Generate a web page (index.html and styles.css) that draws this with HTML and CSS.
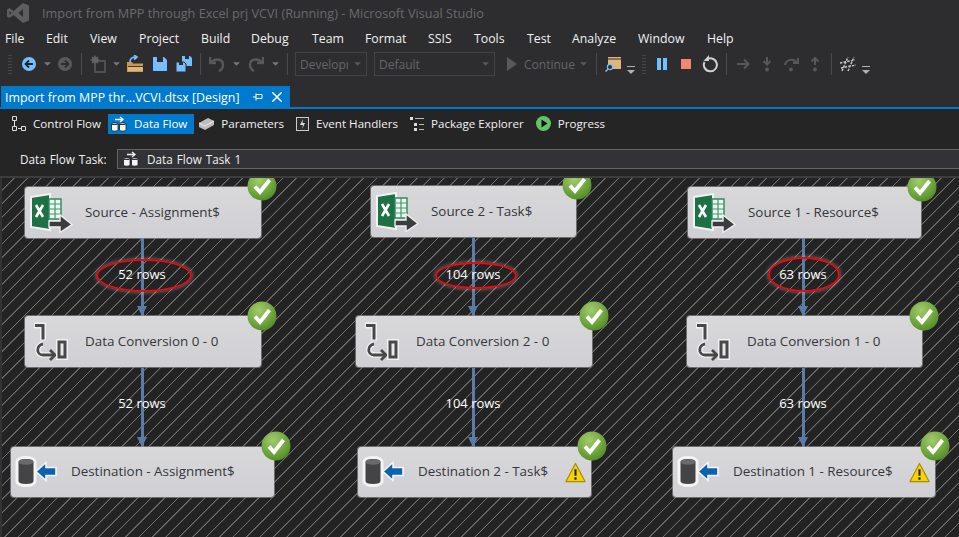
FILE: index.html
```html
<!DOCTYPE html>
<html lang="en">
<head>
<meta charset="utf-8">
<title>Import from MPP through Excel prj VCVI (Running) - Microsoft Visual Studio</title>
<link rel="stylesheet" href="styles.css">
</head>
<body>
<svg class="defs" width="0" height="0" aria-hidden="true">
  <defs>
    <radialGradient id="g-check" cx="40%" cy="30%" r="75%">
      <stop offset="0" stop-color="#a2cb6e"/>
      <stop offset=".55" stop-color="#76ab42"/>
      <stop offset="1" stop-color="#4f8a26"/>
    </radialGradient>
    <symbol id="i-check" viewBox="0 0 30 30">
      <circle cx="15" cy="15" r="14.5" fill="url(#g-check)"/>
      <path d="M8 15.500l5 5.500 9.500-12" fill="none" stroke="#fff" stroke-width="3.800"/>
    </symbol>
    <symbol id="i-excel" viewBox="0 0 44 40">
      <path d="M2 4L21 1v36L2 34z" fill="#1e7145" stroke="#f2f2f2" stroke-width="2"/>
      <path d="M20 6h12v20H20z" fill="#eef4f0" stroke="#2b8a5c" stroke-width="1.400"/>
      <path d="M20 11h12M20 16h12M20 21h12M26 6v20" stroke="#3f9a6c" stroke-width="1.200"/>
      <path d="M7 12l7 12M14 12L7 24" stroke="#fff" stroke-width="2.600" fill="none"/>
      <path d="M20 28h11v-6l12 9.500-12 8v-5.500H20z" fill="#3c3c3e" stroke="#eee" stroke-width="1.400"/>
    </symbol>
    <symbol id="i-conv" viewBox="0 0 40 40">
      <path d="M5 3.500h9v15" fill="none" stroke="#f1f1f1" stroke-width="6"/>
      <path d="M6 3.500h8v14" fill="none" stroke="#48484a" stroke-width="3"/>
      <path d="M14 22c-7 1-7 11 0 11h11" fill="none" stroke="#f1f1f1" stroke-width="5.500"/>
      <path d="M14 22c-7 1-7 11 0 11h11" fill="none" stroke="#48484a" stroke-width="2.800"/>
      <path d="M21 28l5 5-5 5" fill="none" stroke="#48484a" stroke-width="2.800"/>
      <rect x="28" y="18" width="10" height="19" fill="#f1f1f1" stroke="#f1f1f1" stroke-width="2"/>
      <rect x="30" y="20" width="6" height="15" fill="#e8e8e8" stroke="#48484a" stroke-width="3"/>
    </symbol>
    <symbol id="i-dest" viewBox="0 0 42 34">
      <path d="M2 7c0-6 18-6 18 0v19c0 6-18 6-18 0z" fill="#444446" stroke="#f4f4f4" stroke-width="3"/>
      <ellipse cx="11" cy="7" rx="7.500" ry="2.800" fill="#6a6a6c"/>
      <path d="M21 16.500l10-9v5h10v8H31v5z" fill="#0b63b0" stroke="#f5f5f5" stroke-width="1.600"/>
    </symbol>
    <symbol id="i-warn" viewBox="0 0 22 22">
      <path d="M11 1.500L21 20.500H1z" fill="#f5d400" stroke="#a68a00" stroke-width="1.200" stroke-linejoin="round"/>
      <path d="M11 7.500v7M11 16v2.600" stroke="#222" stroke-width="2.200"/>
    </symbol>
    <symbol id="i-flow" viewBox="0 0 16 16">
      <path d="M4 3.500h7M9 1l3 2.500L9 6" fill="none" stroke="currentColor" stroke-width="1.300"/>
      <path d="M.5 8c0-1.500 6.500-1.500 6.500 0v6c0 1.500-6.500 1.500-6.500 0z" fill="#f5f5f5" stroke="#1c1c1c" stroke-width=".8"/>
      <path d="M8.500 8c0-1.500 6.500-1.500 6.500 0v6c0 1.500-6.500 1.500-6.500 0z" fill="#f5f5f5" stroke="#1c1c1c" stroke-width=".8"/>
      <path d="M1 8.500h5.500M9 8.500h5.500" stroke="#333"/>
    </symbol>
    <symbol id="i-drop" viewBox="0 0 8 4"><path d="M0 0h8L4 4z" fill="currentColor"/></symbol>
    <symbol id="i-over" viewBox="0 0 10 9"><path d="M1 0h8v1H1zM1 4h8L5 8z" fill="currentColor"/></symbol>
  </defs>
</svg>

<header class="titlebar">
  <svg class="vs-logo" viewBox="0 0 24 22" width="24" height="22">
    <path d="M17 1l6 2.500v15L17 21 7.500 13l-4 3L1 14.600V7.400L3.500 6l4 3zM17 7l-4.500 4L17 15zM3.500 9v4l2-2z" fill="#5e5e61"/>
  </svg>
  <span class="title-text">Import from MPP through Excel prj VCVI (Running) - Microsoft Visual Studio</span>
</header>

<nav class="menubar">
  <span>File</span><span>Edit</span><span>View</span><span>Project</span><span>Build</span><span>Debug</span><span>Team</span><span>Format</span><span>SSIS</span><span>Tools</span><span>Test</span><span>Analyze</span><span>Window</span><span>Help</span>
</nav>

<div class="toolbar">
  <i class="grip"></i>
  <span class="slot first">
    <svg viewBox="0 0 14 14" width="14" height="14"><circle cx="7" cy="7" r="7" fill="#75beff"/><path d="M11 7H4M7 3.500L3.500 7 7 10.500" fill="none" stroke="#252526" stroke-width="1.800"/></svg>
  </span>
  <span class="drop"><svg width="7" height="4"><use href="#i-drop"/></svg></span>
  <span class="slot">
    <svg viewBox="0 0 14 14" width="14" height="14"><circle cx="7" cy="7" r="7" fill="#58585a"/><path d="M3 7h7M7 3.500L10.500 7 7 10.500" fill="none" stroke="#2d2d30" stroke-width="1.800"/></svg>
  </span>
  <i class="sep"></i>
  <span class="slot">
    <svg viewBox="0 0 16 18" width="16" height="18"><path d="M6 6h9v11H5V9" fill="none" stroke="#505052" stroke-width="2"/><path d="M5 0l1.200 2.200L8.500 1.500 7.800 3.800 10 5 7.800 6.200 8.500 8.500 6.200 7.800 5 10 3.800 7.800 1.500 8.500 2.200 6.200 0 5l2.200-1.200L1.500 1.500l2.300.700z" fill="#626264"/></svg>
  </span>
  <span class="drop"><svg width="7" height="4"><use href="#i-drop"/></svg></span>
  <span class="slot wide">
    <svg viewBox="0 0 18 18" width="18" height="18"><path d="M1 7h5l1 1.500h10V17H1z" fill="#c79a4f"/><path d="M2 11h15v5H2z" fill="#3a3a3c"/><path d="M2 12h15v4H2z" fill="#dcb67a"/><path d="M4 7c0-4 3-5 6-5M8 0l3 2-3 2.500" fill="none" stroke="#75beff" stroke-width="1.700"/></svg>
  </span>
  <span class="slot">
    <svg viewBox="0 0 14 14" width="14" height="14"><path d="M0 0h11l3 3v11H0z" fill="#75beff"/><path d="M4 0h6v5H4z" fill="#2d2d30"/></svg>
  </span>
  <span class="slot">
    <svg viewBox="0 0 16 16" width="16" height="16"><path d="M6 0h8l2 2v8H6z" fill="#75beff"/><path d="M9 0h4v3H9z" fill="#2d2d30"/><path d="M0 6h8l2 2v8H0z" fill="#75beff" stroke="#2d2d30"/><path d="M3 6h4v3H3z" fill="#2d2d30"/></svg>
  </span>
  <i class="sep"></i>
  <span class="slot">
    <svg viewBox="0 0 16 16" width="16" height="16"><path d="M1 1v6h6M2 7c3-5 12-5 12 2 0 3-2 5-4 6" fill="none" stroke="#58585a" stroke-width="2.400"/></svg>
  </span>
  <span class="drop wide"><svg width="7" height="4"><use href="#i-drop"/></svg></span>
  <span class="slot">
    <svg viewBox="0 0 16 16" width="16" height="16"><path d="M15 1v6H9M14 7C11 2 2 2 2 9c0 3 2 5 4 6" fill="none" stroke="#58585a" stroke-width="2.400"/></svg>
  </span>
  <span class="drop wide"><svg width="7" height="4"><use href="#i-drop"/></svg></span>
  <i class="sep"></i>
  <span class="combo combo-a">Developı<svg width="7" height="4"><use href="#i-drop"/></svg></span>
  <span class="combo combo-b">Default<svg width="7" height="4"><use href="#i-drop"/></svg></span>
  <span class="slot play">
    <svg viewBox="0 0 10 14" width="10" height="14"><path d="M0 0l10 7-10 7z" fill="#58585a"/></svg>
  </span>
  <span class="continue">Continue<svg width="7" height="4"><use href="#i-drop"/></svg></span>
  <i class="sep"></i>
  <span class="slot">
    <svg viewBox="0 0 16 16" width="16" height="16"><path d="M3 1h13v12H3z" fill="#dcb67a"/><path d="M3 3h13" stroke="#2d2d30"/><circle cx="5" cy="11" r="2.600" fill="#2d2d30" stroke="#75beff" stroke-width="1.300"/><path d="M3 13l-2.500 2.500" stroke="#75beff" stroke-width="1.500"/></svg>
  </span>
  <span class="over"><svg width="10" height="9"><use href="#i-over"/></svg></span>
  <i class="grip inner"></i>
  <span class="slot">
    <svg viewBox="0 0 10 12" width="10" height="12"><path d="M0 0h4v12H0zM6 0h4v12H6z" fill="#75beff"/></svg>
  </span>
  <span class="slot">
    <svg viewBox="0 0 10 10" width="10" height="10"><rect width="10" height="10" fill="#f48771"/></svg>
  </span>
  <span class="slot">
    <svg viewBox="0 0 16 18" width="16" height="18"><path d="M4 5a6.500 6.500 0 1 1-1.500 2" fill="none" stroke="#d0d0d0" stroke-width="2"/><path d="M7 0v6H1.500z" fill="#d0d0d0"/></svg>
  </span>
  <i class="sep"></i>
  <span class="slot">
    <svg viewBox="0 0 13 10" width="13" height="10"><path d="M0 5h11M7 .5L11.500 5 7 9.500" fill="none" stroke="#58585a" stroke-width="2"/></svg>
  </span>
  <span class="slot">
    <svg viewBox="0 0 10 15" width="10" height="15"><path d="M5 0v7M1.500 4L5 7.500 8.500 4" fill="none" stroke="#58585a" stroke-width="2"/><circle cx="5" cy="12.500" r="2" fill="#58585a"/></svg>
  </span>
  <span class="slot">
    <svg viewBox="0 0 15 15" width="15" height="15"><path d="M1 8c1-6 9-7 12-2M14 1v5H9" fill="none" stroke="#58585a" stroke-width="2"/><circle cx="7" cy="12.500" r="2" fill="#58585a"/></svg>
  </span>
  <span class="slot">
    <svg viewBox="0 0 10 15" width="10" height="15"><path d="M5 8V1M1.500 4.500L5 1l3.500 3.500" fill="none" stroke="#58585a" stroke-width="2"/><circle cx="5" cy="12.500" r="2" fill="#58585a"/></svg>
  </span>
  <i class="sep"></i>
  <span class="slot">
    <svg viewBox="0 0 16 16" width="16" height="16"><path d="M0 7l15-3M1 12l15-3M2 15L8 1M8 15L14 1" fill="none" stroke="#c8c8c8" stroke-width="1.400" stroke-dasharray="2.500 1.200"/></svg>
  </span>
  <span class="over"><svg width="10" height="9"><use href="#i-over"/></svg></span>
</div>

<div class="doc-tabs">
  <div class="doc-tab">
    <span>Import from MPP thr...VCVI.dtsx [Design]</span>
    <svg class="pin" viewBox="0 0 10 8" width="10" height="8"><path d="M0 4h3M3 .5v7M3 1.500h6v4H3" fill="none" stroke="#fff"/></svg>
    <svg class="close" viewBox="0 0 10 10" width="10" height="10"><path d="M0 0l10 10M10 0L0 10" stroke="#fff" stroke-width="1.500"/></svg>
  </div>
</div>

<section class="designer">
  <div class="view-tabs">
    <span class="view-tab">
      <svg viewBox="0 0 15 15" width="15" height="15"><path d="M1.500.5h4v4h-4zM1.500 10.500h4v4h-4zM10.500 10.500h4v4h-4z" fill="none" stroke="#ddd"/><path d="M3.500 5v5M7 12.500h3" stroke="#ddd"/></svg>
      Control Flow
    </span>
    <span class="view-tab active">
      <svg width="16" height="16"><use href="#i-flow"/></svg>
      Data Flow
    </span>
    <span class="view-tab">
      <svg viewBox="0 0 15 13" width="15" height="13"><path d="M0 6l9-5 6 3v4l-9 5-6-3z" fill="#bdbdbd"/><path d="M0 6l6 3 9-5" fill="none" stroke="#eee"/></svg>
      Parameters
    </span>
    <span class="view-tab">
      <svg viewBox="0 0 13 14" width="13" height="14"><rect x=".5" y=".5" width="12" height="13" fill="#2d2d30" stroke="#ccc"/><path d="M7 2L4 8h3l-1 4 3-6H6.500z" fill="#ddd"/></svg>
      Event Handlers
    </span>
    <span class="view-tab">
      <svg viewBox="0 0 14 14" width="14" height="14"><path d="M0 0h3v3H0zM4 6h3v3H4zM4 11h3v3H4z" fill="#ddd"/><path d="M5 1.500h9M9 7.500h5M9 12.500h5" stroke="#bbb"/></svg>
      Package Explorer
    </span>
    <span class="view-tab">
      <svg viewBox="0 0 15 15" width="15" height="15"><circle cx="7.500" cy="7.500" r="7.500" fill="#63c467"/><path d="M5.500 3.500l6 4-6 4z" fill="#111"/></svg>
      Progress
    </span>
  </div>
  <div class="task-row">
    <span class="task-label">Data Flow Task:</span>
    <div class="task-box">
      <svg width="16" height="16"><use href="#i-flow"/></svg>
      <span>Data Flow Task 1</span>
    </div>
  </div>
</section>

<main class="canvas">
  <div class="flow flow-a"></div><div class="flow flow-b"></div><div class="flow flow-c"></div>
  <div class="flow flow-d"></div><div class="flow flow-e"></div><div class="flow flow-f"></div>

  <span class="rows col-a row-1">52 rows</span><span class="rows col-b row-1">104 rows</span><span class="rows col-c row-1">63 rows</span>
  <span class="rows col-a row-2">52 rows</span><span class="rows col-b row-2">104 rows</span><span class="rows col-c row-2">63 rows</span>

  <div class="node n1"><svg class="n-icon" width="44" height="40"><use href="#i-excel"/></svg><span>Source - Assignment$</span></div>
  <div class="node n2"><svg class="n-icon" width="44" height="40"><use href="#i-excel"/></svg><span>Source 2 - Task$</span></div>
  <div class="node n3"><svg class="n-icon" width="44" height="40"><use href="#i-excel"/></svg><span>Source 1 - Resource$</span></div>
  <div class="node n4"><svg class="n-icon" width="40" height="40"><use href="#i-conv"/></svg><span>Data Conversion 0 - 0</span></div>
  <div class="node n5"><svg class="n-icon" width="40" height="40"><use href="#i-conv"/></svg><span>Data Conversion 2 - 0</span></div>
  <div class="node n6"><svg class="n-icon" width="40" height="40"><use href="#i-conv"/></svg><span>Data Conversion 1 - 0</span></div>
  <div class="node n7"><svg class="n-icon" width="42" height="34"><use href="#i-dest"/></svg><span>Destination - Assignment$</span></div>
  <div class="node n8"><svg class="n-icon" width="42" height="34"><use href="#i-dest"/></svg><span>Destination 2 - Task$</span><svg class="warn" width="21" height="21"><use href="#i-warn"/></svg></div>
  <div class="node n9"><svg class="n-icon" width="42" height="34"><use href="#i-dest"/></svg><span>Destination 1 - Resource$</span><svg class="warn" width="21" height="21"><use href="#i-warn"/></svg></div>

  <svg class="badge b1" width="30" height="30"><use href="#i-check"/></svg>
  <svg class="badge b2" width="30" height="30"><use href="#i-check"/></svg>
  <svg class="badge b3" width="30" height="30"><use href="#i-check"/></svg>
  <svg class="badge b4" width="30" height="30"><use href="#i-check"/></svg>
  <svg class="badge b5" width="30" height="30"><use href="#i-check"/></svg>
  <svg class="badge b6" width="30" height="30"><use href="#i-check"/></svg>
  <svg class="badge b7" width="30" height="30"><use href="#i-check"/></svg>
  <svg class="badge b8" width="30" height="30"><use href="#i-check"/></svg>
  <svg class="badge b9" width="30" height="30"><use href="#i-check"/></svg>

  <i class="ring ring-a"></i><i class="ring ring-b"></i><i class="ring ring-c"></i>
</main>
</body>
</html>
```
FILE: styles.css
```css
* { box-sizing: border-box; }
html, body { margin: 0; height: 100%; }
body {
  width: 959px;
  height: 537px;
  overflow: hidden;
  background: #2d2d30;
  color: #f1f1f1;
  font: 12px "Open Sans", "Noto Sans", sans-serif;
  display: flex;
  flex-direction: column;
}
.defs { position: absolute; }

.titlebar { height: 26px; display: flex; align-items: center; padding-left: 6px; flex: none; }
.vs-logo { flex: none; }
.title-text { margin-left: 12px; color: #6a6a6d; font-size: 12.700px; white-space: nowrap; }

.menubar { height: 24px; display: flex; align-items: center; padding-left: 5px; flex: none; font-size: 12.300px; color: #f1f1f1; }
.menubar span:nth-child(1) { width: 41px; }
.menubar span:nth-child(2) { width: 44px; }
.menubar span:nth-child(3) { width: 49px; }
.menubar span:nth-child(4) { width: 62px; }
.menubar span:nth-child(5) { width: 50px; }
.menubar span:nth-child(6) { width: 61px; }
.menubar span:nth-child(7) { width: 53px; }
.menubar span:nth-child(8) { width: 63px; }
.menubar span:nth-child(9) { width: 46px; }
.menubar span:nth-child(10) { width: 53px; }
.menubar span:nth-child(11) { width: 45px; }
.menubar span:nth-child(12) { width: 66px; }
.menubar span:nth-child(13) { width: 69px; }

.toolbar { height: 28px; margin-bottom: 8px; display: flex; align-items: center; padding-left: 8px; flex: none; color: #8a8a8c; }
.grip {
  width: 4px; height: 20px; flex: none;
  background: repeating-linear-gradient(0deg, #46464a 0 1px, transparent 1px 3px);
}
.grip.inner { margin: 0 4px 0 5px; }
.slot { width: 24px; height: 24px; flex: none; display: flex; align-items: center; justify-content: center; }
.slot.first { margin-left: 5px; }
.slot.wide { width: 26px; }
.slot.play { margin-left: 5px; }
.drop { width: 12px; height: 24px; flex: none; display: flex; align-items: center; justify-content: center; color: #77777a; }
.drop.wide { width: 15px; }
.over { width: 12px; height: 24px; flex: none; display: flex; align-items: flex-end; justify-content: center; padding-bottom: 1px; color: #b0b0b0; }
.sep { width: 1px; height: 22px; background: #4a4a4d; flex: none; margin: 0 4px; }
.combo {
  height: 24px; flex: none; border: 1px solid #434346;
  display: flex; align-items: center; justify-content: space-between;
  padding: 1px 5px 0 4px; color: #656568; font-size: 12px; margin-left: 3px; overflow: hidden;
}
.combo-a { width: 72px; }
.combo-b { width: 121px; margin-left: 7px; }
.combo svg, .continue svg { color: #58585a; flex: none; margin-bottom: 2px; }
.continue { display: flex; align-items: center; gap: 5px; color: #656568; margin-right: 3px; padding-top: 1px; width: 65px; flex: none; }

.doc-tabs { height: 23px; flex: none; border-bottom: 2px solid #007acc; padding-left: 1px; }
.doc-tab {
  width: 289px; height: 21px; background: #007acc; color: #fff;
  display: flex; align-items: center; padding: 2px 0 0 4px; font-size: 12.400px; white-space: nowrap;
}
.doc-tab .pin { margin-left: auto; margin-bottom: 2px; }
.doc-tab .close { margin: 0 8px 2px 9px; }

.designer { background: #252526; height: 69px; flex: none; border-bottom: 2px solid #3c3c3e; }
.view-tabs { display: flex; align-items: center; height: 20px; margin-top: 5px; padding-left: 11px; color: #f1f1f1; font-size: 11.600px; }
.view-tab { display: flex; align-items: center; gap: 7px; height: 20px; padding-bottom: 1px; white-space: nowrap; margin-right: 12px; }
.view-tab:nth-child(1) { margin-right: 7px; }
.view-tab.active { background: #007acc; padding: 0 7px 1px 3px; color: #fff; margin-right: 5px; }
.task-row { display: flex; align-items: center; height: 22px; margin-top: 14px; padding-left: 20px; font-size: 11.700px; }
.task-label { width: 97px; flex: none; word-spacing: 1px; padding-bottom: 1px; }
.task-box {
  flex: 1; height: 20px; display: flex; align-items: center; gap: 8px; padding: 0 0 1px 5px;
  background: #333337; border: 1px solid #636366; border-right: 0; word-spacing: 1px;
}

.canvas {
  position: relative;
  flex: 1;
  overflow: hidden;
  background-color: #232324;
  background-image: repeating-linear-gradient(135deg, #232324 0 8px, #6f6f6f 8.400px 9px, #232324 9.400px 9.500px);
  border-left: 2px solid #333336;
}

.node {
  position: absolute; height: 51px; border-radius: 3px;
  background: linear-gradient(#d8d8db, #d0d0d4);
  box-shadow: 0 0 0 1px rgba(140,140,142,.7);
  display: flex; align-items: center; color: #36363a; font-size: 13.400px; white-space: nowrap;
}
.n-icon { flex: none; margin-left: 4px; }
.node span { position: absolute; left: 60px; padding-bottom: 2px; }
.warn { margin-left: auto; margin-right: 5px; flex: none; }

.n1 { left: 23px; top: 9px; width: 236px; }
.n2 { left: 369px; top: 8px; width: 205px; }
.n3 { left: 686px; top: 9px; width: 233px; }
.n4 { left: 23px; top: 138px; width: 236px; }
.n5 { left: 354px; top: 138px; width: 236px; }
.n6 { left: 685px; top: 138px; width: 235px; }
.n7 { left: 9px; top: 269px; width: 263px; height: 50px; }
.n8 { left: 356px; top: 269px; width: 233px; height: 50px; }
.n9 { left: 671px; top: 269px; width: 262px; height: 50px; }

.badge { position: absolute; }
.b1 { left: 245px; top: -7px; }
.b2 { left: 560px; top: -8px; }
.b3 { left: 905px; top: -6px; }
.b4 { left: 245px; top: 123px; }
.b5 { left: 577px; top: 123px; }
.b6 { left: 907px; top: 123px; }
.b7 { left: 259px; top: 253px; }
.b8 { left: 575px; top: 253px; }
.b9 { left: 918px; top: 253px; }

.flow { position: absolute; width: 3px; background: #5b7ba8; }
.flow::after {
  content: ""; position: absolute; left: -4px; bottom: 0;
  border-left: 5.500px solid transparent; border-right: 5.500px solid transparent;
  border-top: 10px solid #5b7ba8;
}
.flow-a, .flow-d { left: 139px; }
.flow-b, .flow-e { left: 470px; }
.flow-c, .flow-f { left: 800px; }
.flow-a, .flow-b, .flow-c { top: 60px; height: 78px; }
.flow-d, .flow-e, .flow-f { top: 190px; height: 79px; }

.rows { position: absolute; transform: translateX(-50%); color: #fff; font-size: 13px; white-space: nowrap; }
.col-a { left: 140px; }
.col-b { left: 471px; }
.col-c { left: 801px; }
.row-1 { top: 87px; }
.row-2 { top: 216px; }

.ring { position: absolute; border: 2.500px solid #ea0a12; border-radius: 50%; box-shadow: 0 0 4px rgba(255,255,255,.45); }
.ring-a { left: 94px; top: 81px; width: 96px; height: 33px; }
.ring-b { left: 433px; top: 84px; width: 82px; height: 27px; }
.ring-c { left: 766px; top: 79px; width: 72px; height: 35px; }
```
